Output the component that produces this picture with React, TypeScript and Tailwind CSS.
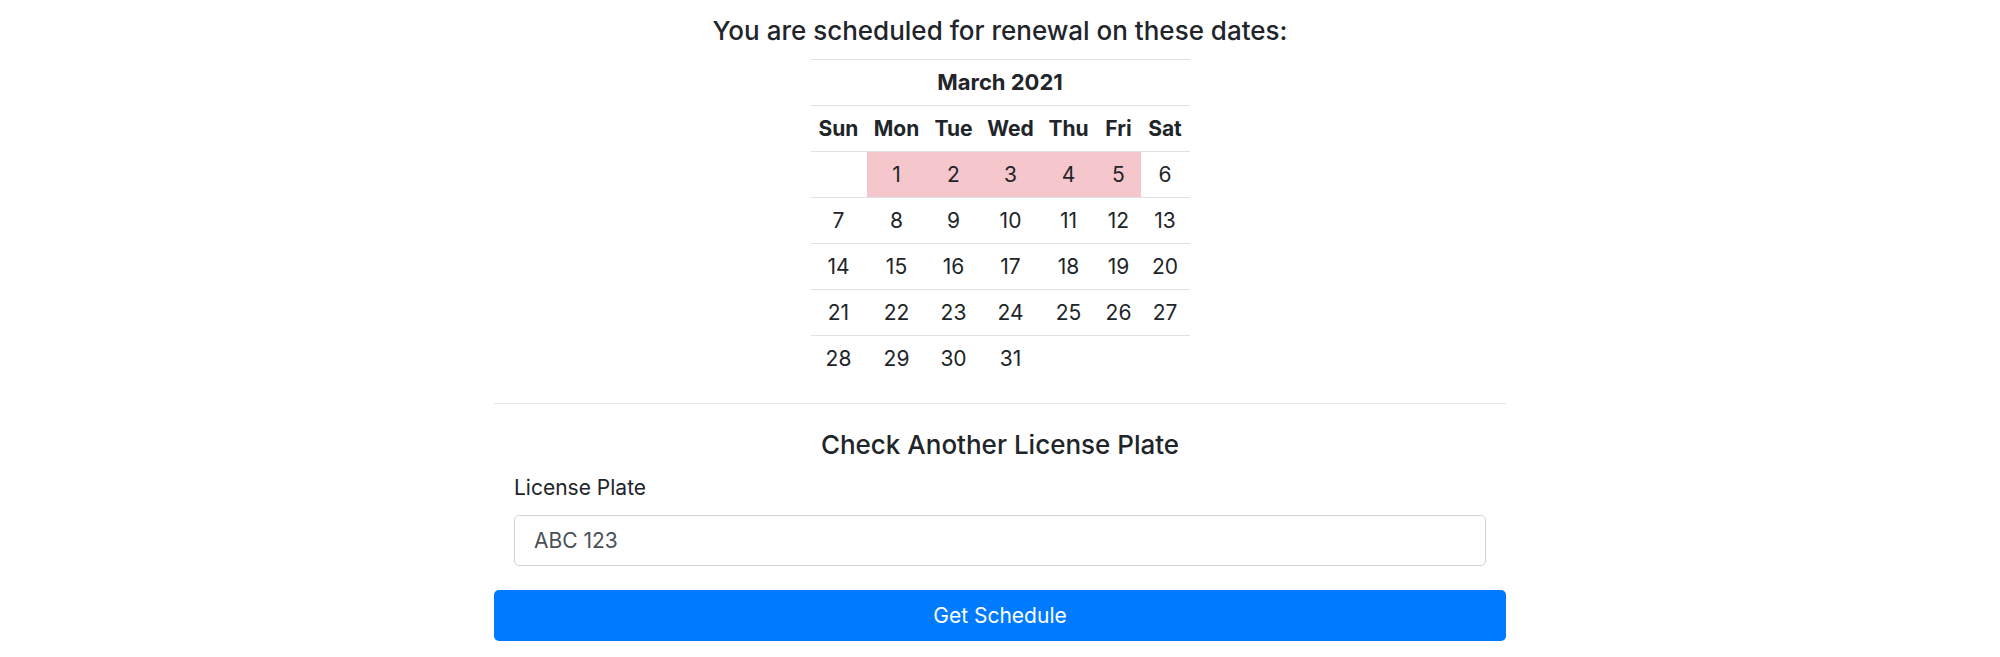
import React from 'react'

const days = ['Sun', 'Mon', 'Tue', 'Wed', 'Thu', 'Fri', 'Sat']
const colWidths = ['w-[56px]', 'w-[60px]', 'w-[54px]', 'w-[60px]', 'w-[56px]', 'w-[44px]', 'w-[49px]']

// March 2021 starts on a Monday
const weeks: (number | null)[][] = [
  [null, 1, 2, 3, 4, 5, 6],
  [7, 8, 9, 10, 11, 12, 13],
  [14, 15, 16, 17, 18, 19, 20],
  [21, 22, 23, 24, 25, 26, 27],
  [28, 29, 30, 31, null, null, null],
]

const renewalDays = [1, 2, 3, 4, 5]

const App = () => {
  return (
    <div className="min-h-screen bg-white text-[#212529] font-['Inter','Liberation_Sans',sans-serif] pt-[13px]">
      <div className="w-[1012px] mx-auto">
        <h3 className="text-center text-[26px] leading-[36px] font-medium mb-[10px]">
          You are scheduled for renewal on these dates:
        </h3>

        {/* Calendar */}
        <table className="mx-auto table-fixed border-collapse text-[21px] text-center">
          <colgroup>
            {colWidths.map((w, i) => (
              <col key={i} className={w} />
            ))}
          </colgroup>
          <thead>
            <tr className="border-t border-[#dee2e6]">
              <th colSpan={7} className="font-bold text-[22px] leading-[25px] py-[10px]">
                March 2021
              </th>
            </tr>
            <tr className="border-t border-[#dee2e6]">
              {days.map((d) => (
                <th key={d} className="font-bold leading-[25px] py-[10px] px-0">
                  {d}
                </th>
              ))}
            </tr>
          </thead>
          <tbody>
            {weeks.map((week, wi) => (
              <tr key={wi} className="border-t border-[#dee2e6]">
                {week.map((day, di) => (
                  <td
                    key={di}
                    className={`leading-[25px] py-[10px] px-0 ${
                      day !== null && renewalDays.includes(day) ? 'bg-[#f5c6cb]' : ''
                    }`}
                  >
                    {day ?? ''}
                  </td>
                ))}
              </tr>
            ))}
          </tbody>
        </table>

        <hr className="mt-[22px] border-0 border-t border-[#e5e5e5]" />

        {/* Lookup form */}
        <form className="mt-[25px]">
          <h4 className="text-center text-[26px] leading-[31px] font-medium mb-[13px]">
            Check Another License Plate
          </h4>
          <div className="px-[20px]">
            <label className="block text-[21px] leading-[30px] mb-[12px]">License Plate</label>
            <input
              type="text"
              defaultValue="ABC 123"
              className="block w-full h-[51px] px-[19px] text-[21px] text-[#495057] border border-[#ced4da] rounded-[5px] outline-none"
            />
          </div>
          <button
            type="button"
            className="mt-[24px] w-full h-[51px] bg-[#007bff] text-white text-[21px] rounded-[5px]"
          >
            Get Schedule
          </button>
        </form>
      </div>
    </div>
  )
}

export default App
